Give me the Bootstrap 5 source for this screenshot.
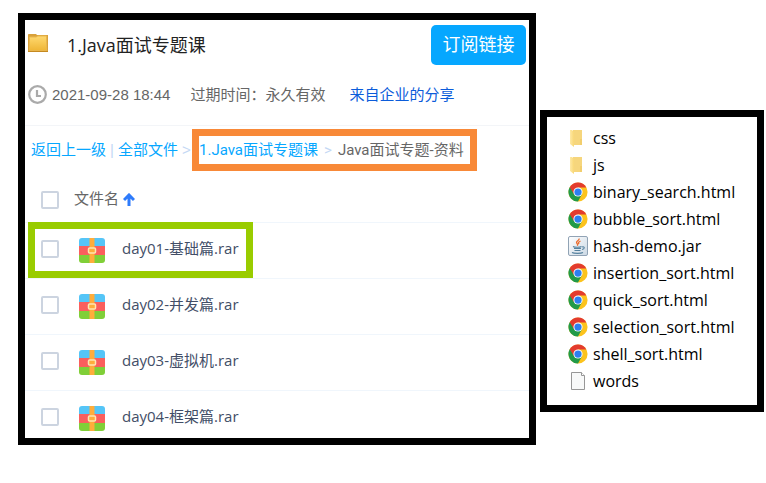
<!DOCTYPE html>
<html lang="zh-CN">
<head>
<meta charset="utf-8">
<meta name="viewport" content="width=device-width, initial-scale=1">
<title>1.Java面试专题课</title>
<link href="https://cdn.jsdelivr.net/npm/bootstrap@5.3.0/dist/css/bootstrap.min.css" rel="stylesheet">
<style>
body{font:15px/20px "Liberation Sans","Noto Sans CJK SC",sans-serif;color:#666;background:#fff}
a{text-decoration:none;color:#06a7ff}
.page{padding:13px 2px 0 18px;gap:4px}
.frame{border:7px solid #000}
.share-top{padding:5px 3px 0;height:45px}
.share-title{font:400 18px/24px "Open Sans","Noto Sans CJK SC",sans-serif;color:#222;margin:0 0 0 18px}
.folder{margin-bottom:4px}
.btn-sub{width:95px;height:40px;padding:0;border:0;border-radius:5px;background:#06a7ff;color:#fff;font-size:18px}
.share-info{padding:20px 3px;border-bottom:1px solid #f3f5f8}
.share-info a{color:#0b5cda}
.info-date{margin:0 20px 0 4px}
.info-time{margin-right:24px}
.crumbs{padding:3px 0 0 6px;height:45px}
.sep{color:#c4d8f4}
.crumb-root{width:161px}
.crumb-mark{border:7px solid #f88938;height:42px;font-family:"Roboto","Noto Sans CJK SC",sans-serif;padding-right:6px}
.crumb-mark .sep{padding:0 6px}
.files{width:100%}
.files th,.files td{padding:0;vertical-align:top;font-weight:400}
.files tr{border-bottom:1px solid #f0f6fc}
.files tbody tr:last-child{border:0}
.files th{height:51px}
.files td{height:56px;font-family:"Open Sans","Noto Sans CJK SC",sans-serif;color:#424e67}
.files tbody tr:last-child td{height:48px}
.cell{padding-top:15px;height:36px}
thead .cell{padding-top:18px}
.files .col-tick{width:49px;padding-left:16px}
.tick{appearance:none;display:block;width:18px;height:18px;margin:2px 0 0;border:2px solid #ccd4e0;border-radius:2px;background:#fff}
.tick:checked{background:#06a7ff}
.rar{width:26px;height:26px;margin:0 17px 0 5px}
.picked{left:3px;top:0;width:225px;height:56px;border:7px solid #9c0;pointer-events:none}
.tree{width:224px;margin-top:97px;padding:8px 0 10px 21px}
.tree li{height:27px;gap:5px;font:16px/27px "Open Sans","Noto Sans CJK SC",sans-serif;color:#000}
.tree svg{width:20px;height:20px;margin-bottom:2px}
</style>
<script src="https://cdn.jsdelivr.net/npm/bootstrap@5.3.0/dist/js/bootstrap.bundle.min.js"></script>
</head>
<body>
<svg width="0" height="0" class="position-absolute" aria-hidden="true">
<defs>
<linearGradient id="gold" x2="0" y2="1"><stop stop-color="#ffd970"/><stop offset="1" stop-color="#efb636"/></linearGradient>
<linearGradient id="pale" x2="1" y2="0"><stop stop-color="#ffe9a6"/><stop offset="1" stop-color="#f8d775"/></linearGradient>
<linearGradient id="steel" x2="1" y2="1"><stop stop-color="#fff"/><stop offset="1" stop-color="#cbd8e4"/></linearGradient>
<clipPath id="tile"><rect width="26" height="25" rx="3"/></clipPath>
<symbol id="i-rar" viewBox="0 0 26 26"><g clip-path="url(#tile)"><path fill="#55c5f7" d="M0 0h26v9H0z"/><path fill="#fa5f5d" d="M0 8h26v9H0z"/><path fill="#80cf38" d="M0 17h26v8H0z"/><path fill="#ffad3b" d="M10.500 0h5v25h-5z"/></g><rect x="9.500" y="10" width="7" height="5" rx="1" fill="#ffad3b" stroke="#ffe5b3" stroke-width="1.500"/></symbol>
<symbol id="i-chrome" viewBox="0 0 48 48"><circle cx="24" cy="24" r="23" fill="#fcc31d"/><path fill="#219a49" d="M4.100 12.500A23 23 0 0 0 24 47L33.500 29.500 24 24z"/><path fill="#e33b2e" d="M4.100 12.500 14.500 29.500 24 13h20A23 23 0 0 0 4.100 12.500z"/><circle cx="24" cy="24" r="11" fill="#fff"/><circle cx="24" cy="24" r="8.700" fill="#2d7ff0"/></symbol>
<symbol id="i-folder" viewBox="0 0 20 20"><path fill="#f6d67d" d="M5 2h9v15H5z"/><path fill="url(#pale)" d="M2 2h2l2 2v15l-4-3z"/><path fill="#f2ce6d" d="M12 11h2v6h-2z"/></symbol>
<symbol id="i-jar" viewBox="0 0 20 20"><rect x=".5" y=".5" width="19" height="19" rx="1.500" fill="url(#steel)" stroke="#91a3b5"/><path fill="none" stroke="#ec6b2d" stroke-width="1.300" d="M11 2.500c1 2-4 3-2 5 1 1 1 1.500 0 2M12.500 5c-3 1.500-2 2-1.500 3"/><path fill="none" stroke="#56829f" stroke-width="1.100" d="M5 10.500c1.500 1 7 1 8.500 0M6 12.500h7M6.500 14.500h6M4 16.500c2 1.200 9 1.200 11 0M14 11c3-1 3 2 0 2.500"/></symbol>
<symbol id="i-page" viewBox="0 0 20 20"><path fill="#f8f9f9" stroke="#979797" d="M3.500 1.500h10l3 3v14h-13z"/><path fill="#fff" stroke="#979797" d="M13.500 1.500v3h3"/></symbol>
</defs>
</svg>
<div class="page d-flex align-items-start">
<main class="frame flex-grow-1">
<header class="share-top d-flex justify-content-between">
<div class="d-flex align-items-center">
<svg class="folder" width="21" height="20" viewBox="0 0 21 20" aria-hidden="true"><path fill="#d9a13a" d="M0 1.500Q0 1 1 1h7l1 1h11v17H0z"/><path fill="url(#gold)" stroke="#e8b64d" d="M1.500 4h7l1-1h9v14.500h-17z"/><path stroke="#c58920" d="M0 18.500h20"/></svg>
<h1 class="share-title">1.Java面试专题课</h1>
</div>
<button type="button" class="btn btn-sub">订阅链接</button>
</header>
<div class="share-info d-flex align-items-center">
<svg width="20" height="20" viewBox="0 0 20 20" fill="none" stroke="#aaa" aria-hidden="true"><circle cx="9.500" cy="9.500" r="8.300" stroke-width="2.200"/><path stroke-width="2.200" d="M9 5v6h4"/></svg>
<span class="info-date">2021-09-28 18:44</span><span class="info-time">过期时间：永久有效</span><a href="#">来自企业的分享</a>
</div>
<nav class="crumbs d-flex" aria-label="路径">
<div class="crumb-root d-flex align-items-center"><a href="#">返回上一级</a><span class="sep px-1">|</span><a href="#">全部文件</a><span class="sep ps-1">&gt;</span></div>
<div class="crumb-mark d-flex align-items-center"><a href="#">1.Java面试专题课</a><span class="sep">&gt;</span><span>Java面试专题-资料</span></div>
</nav>
<div>
<table class="files">
<thead><tr><th class="col-tick"><div class="cell"><input class="tick" type="checkbox" aria-label="全选"></div></th><th><div class="cell">文件名 <svg width="12" height="14" viewBox="0 0 12 14" fill="none" stroke="#2e7bfb" stroke-width="3" aria-hidden="true"><path d="M6 13V3M1 7l5-5 5 5"/></svg></div></th></tr></thead>
<tbody>
<tr class="position-relative"><td class="col-tick"><div class="cell"><input id="f1" class="tick" type="checkbox"></div></td><td><label for="f1" class="cell d-flex"><svg class="rar" aria-hidden="true"><use href="#i-rar"/></svg>day01-基础篇.rar</label><div class="picked position-absolute"></div></td></tr>
<tr><td class="col-tick"><div class="cell"><input id="f2" class="tick" type="checkbox"></div></td><td><label for="f2" class="cell d-flex"><svg class="rar" aria-hidden="true"><use href="#i-rar"/></svg>day02-并发篇.rar</label></td></tr>
<tr><td class="col-tick"><div class="cell"><input id="f3" class="tick" type="checkbox"></div></td><td><label for="f3" class="cell d-flex"><svg class="rar" aria-hidden="true"><use href="#i-rar"/></svg>day03-虚拟机.rar</label></td></tr>
<tr><td class="col-tick"><div class="cell"><input id="f4" class="tick" type="checkbox"></div></td><td><label for="f4" class="cell d-flex"><svg class="rar" aria-hidden="true"><use href="#i-rar"/></svg>day04-框架篇.rar</label></td></tr>
</tbody>
</table>
</div>
</main>
<aside class="frame tree flex-shrink-0">
<ul class="list-unstyled mb-0">
<li class="d-flex align-items-center"><svg aria-hidden="true"><use href="#i-folder"/></svg>css</li>
<li class="d-flex align-items-center"><svg aria-hidden="true"><use href="#i-folder"/></svg>js</li>
<li class="d-flex align-items-center"><svg aria-hidden="true"><use href="#i-chrome"/></svg>binary_search.html</li>
<li class="d-flex align-items-center"><svg aria-hidden="true"><use href="#i-chrome"/></svg>bubble_sort.html</li>
<li class="d-flex align-items-center"><svg aria-hidden="true"><use href="#i-jar"/></svg>hash-demo.jar</li>
<li class="d-flex align-items-center"><svg aria-hidden="true"><use href="#i-chrome"/></svg>insertion_sort.html</li>
<li class="d-flex align-items-center"><svg aria-hidden="true"><use href="#i-chrome"/></svg>quick_sort.html</li>
<li class="d-flex align-items-center"><svg aria-hidden="true"><use href="#i-chrome"/></svg>selection_sort.html</li>
<li class="d-flex align-items-center"><svg aria-hidden="true"><use href="#i-chrome"/></svg>shell_sort.html</li>
<li class="d-flex align-items-center"><svg aria-hidden="true"><use href="#i-page"/></svg>words</li>
</ul>
</aside>
</div>
</body>
</html>
